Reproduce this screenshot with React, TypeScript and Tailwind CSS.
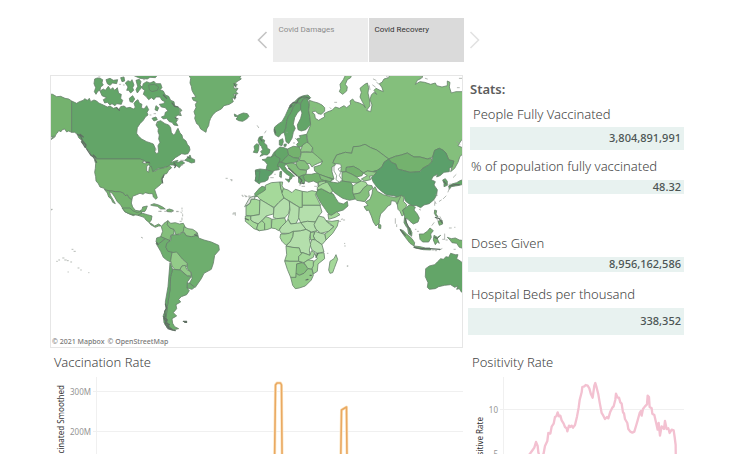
import React from "react";

type Shape = [fill: string, d: string];
type Region = { name: string; origin: [number, number]; shapes: Shape[]; islets: string; rugged?: string };

const DEEP = "#5b9f6a";
const DARK = "#63a568";
const MID = "#6eae6e";
const GREEN = "#74b26e";
const SOFT = "#84bf7c";
const LIGHT = "#93cb89";
const PALE = "#a5d99a";
const FAINT = "#b4dfac";
const NONE = "#dddfdc";

/* Every region is drawn at three units per map pixel, from its own origin. */
const regions: Region[] = [
  {
    name: "North America",
    origin: [50, 75],
    shapes: [
      [GREEN, "M-3 57L8 58L20 65L32 64L45 70L56 72L65 78V172L56 168L50 171L44 162L37 164L33 170L26 167L22 174L18 178L14 186L3 194L10 183L4 186L-3 192Z"],
      [DARK, "M65 78L80 85L88 80L100 76L104 71L112 76L118 70L122 80L132 75L140 78L146 84L160 90L172 96L180 93L190 100L200 97L206 104L212 95L222 93L230 99L240 97L250 102L256 97L252 85L258 78L264 74L268 84L276 88L274 98L282 102L290 92L296 104L291 112L294 120L286 126L280 136L270 146L262 158L260 175L266 184L275 192L290 200L302 204L310 207L316 220L315 230L320 236L326 232L324 212L330 202L326 192L328 180L324 170L325 160L318 150L322 140L332 137L345 146L356 150L362 158L364 172L370 180L376 176L380 166L384 160L390 174L396 180L398 190L408 198L412 208L418 215L420 225L414 236L405 238L395 236L386 242L376 248L368 256L362 264L372 259L384 256L380 262L372 270L360 270L352 276L345 275L340 279L325 280L316 286L308 290L304 282L298 270L290 262L280 256L270 252H137L128 243L122 240L118 228L110 222L104 210L98 206L95 196L86 188L82 178L74 172L65 172Z"],
      [DARK, "M134 12L142 9L150 10L158 14L156 24L160 30L152 36L150 46L144 48L138 58L133 50L137 38L132 26Z"],
      [DARK, "M150 48L160 42L166 46L175 34L182 44L188 38L194 46L202 38L206 55L214 58L212 70L218 76L214 88L200 86L195 92L186 86L180 90L172 82L164 84L160 74L170 68L156 62Z"],
      [DARK, "M226 24L234 17L241 20L246 14L252 30L248 38L251 46L242 54L236 46L230 46L234 36Z"],
      [DARK, "M258 16L268 13L273 20L270 30L276 36L268 46L262 54L258 44L263 34Z"],
      [DARK, "M168 14L180 10L190 16L203 14L200 26L188 24L180 31L172 26Z"],
      [DARK, "M212 8L222 6L224 18L216 20Z"],
      [DARK, "M238 70L248 62L254 72L248 82L240 80Z"],
      [DARK, "M250 1H322L316 8L300 7L292 12L270 10Z"],
      [DARK, "M280 26L290 20L300 24L312 19L318 26L332 26L336 38L330 44L340 48L346 60L356 64L362 76L372 80L374 92L384 96L396 106L390 112L394 122L384 120L376 126L382 136L378 142L384 152L372 150L366 142L358 140L350 130L340 132L334 126L344 122L346 112L354 108L346 98L334 96L328 88L340 86L345 80L336 76L330 66L318 66L312 74L304 68L296 74L288 64L280 58L284 46L276 40Z"],
      [DARK, "M296 30L314 28L326 36L322 46L306 50L298 44Z"],
      [DARK, "M318 92L326 98L322 108L315 104Z M306 130L318 126L322 134L312 138Z"],
      [DARK, "M372 264L384 262L396 258L404 264L394 270L388 278L380 272L372 272Z"],
      [DARK, "M404 256L416 246L420 240L424 250L434 254L434 262L424 264L416 260Z"],
      [GREEN, "M137 252H270L284 257L276 262L286 266L292 262L300 266L296 270L290 274L290 288L296 292L298 276L304 274L308 290L318 287L325 282L340 279L350 276L358 272L365 278L356 286L350 296L342 298L340 308L334 312L337 322L330 330L320 338L314 344L318 356L322 368L318 373L310 366L308 356L298 356L285 353L280 358L270 355L258 360L248 364L246 374L238 370L232 360L225 362L220 354L208 350L196 350L184 348L170 346L162 340L150 336L145 326L138 318L137 305L134 292L136 280L137 266L134 256Z"],
      [GREEN, "M163 343L170 346L184 348L196 350L208 350L220 354L225 362L232 360L238 370L246 374L244 384L248 396L256 406L268 408L276 404L278 396L292 393L288 404L284 410L276 410L270 420L262 416L250 422L236 416L224 410L218 400L212 390L202 380L194 366L186 354L178 350L182 362L188 372L196 386L188 382L184 372L176 366L172 354Z"],
      [GREEN, "M302 390L312 386L326 390L338 396L346 402L332 402L322 394L308 392Z"],
      [GREEN, "M350 405L358 402L370 406L366 411L352 410Z"],
    ],
    islets: "M326 409h6M380 410h5M396 408h1M280 14h4M208 28h4M220 30h3M146 6h4M312 116h5M300 120h3M2 402l3 3M6 192l-4 4M12 188l4 -3M320 146h3M318 222v3M392 256h10",
    rugged: "M82 178L92 184L98 198L108 210L106 218L100 208L94 200M110 222L122 240L130 246L140 262M288 262h10M342 300l-6 10l2 14M372 264l6 8l-4 6M376 128l8 4M366 84l8 10l10 2M200 98l8 8M340 60l10 10M90 178l10 8M130 240l8 8",
  },
  {
    name: "Europe",
    origin: [180, 75],
    shapes: [
      [MID, "M24 -3H186L180 8L184 12L174 18L166 24L172 30L160 34L164 42L174 40L168 50L174 56L160 58L168 68L156 70L160 80L148 88L132 92L124 102L108 110L98 120L92 130L88 140L86 152L80 162L78 172L68 166L62 162L56 150L50 146L44 130L46 122L42 110L48 98L46 88L52 80L40 76L36 68L48 66L40 54L36 46L34 34L30 24L32 10Z"],
      [DARK, "M163 117L172 122L180 118L190 114L202 116L207 124L200 132L188 139L176 137L168 132L174 126L164 124Z"],
      [DARK, "M238 186L248 184L246 192L254 196L252 204L260 210L262 220L270 224L268 234L262 240L252 239L240 244L246 236L242 230L248 224L244 214L238 208L234 196Z"],
      [DARK, "M222 214L230 206L237 210L236 224L232 234L220 232L224 224Z"],
      [DARK, "M284 156L296 146L306 140L316 122L324 104L330 92L344 80L356 68L370 62L384 60L392 68L384 76L376 70L370 72L362 86L350 82L340 96L334 112L324 126L320 140L318 158L312 172L304 176L296 186L286 180L282 168Z"],
      [DARK, "M350 82L362 88V104L352 114L344 128L340 148L346 160L340 172L336 190L326 206L318 200L316 186L312 172L318 158L320 140L324 126L334 112L340 96Z"],
      [DARK, "M362 86L370 72L376 70L384 76L388 90L386 106L390 130L392 148L378 164L364 168L354 164L352 150L362 130L366 114L362 104Z"],
      [DARK, "M298 196L308 191L310 200L306 212L298 210Z M312 208L319 207L318 214L312 214Z"],
      [DARK, "M246 254L258 252L262 246L274 246L284 238L300 250L304 256L294 268L298 284L286 286L276 290L258 284L262 268L254 258Z"],
      [DARK, "M274 246L282 232L290 226L290 244L284 240Z"],
      [DARK, "M284 234L290 224L300 216L312 218L322 222L326 240L316 248L322 258L298 262L300 250L288 244Z"],
      [DEEP, "M226 285L240 282L258 284L280 290L276 296L266 304L264 314L254 320L242 322L238 327L226 318L228 302Z"],
      [DEEP, "M226 288H240L238 302L236 318H225L228 304Z"],
      [DARK, "M296 262L312 262L318 266L314 274L322 286L334 294L344 304L338 304L334 312L328 314L330 304L318 296L306 284L300 276L292 274Z"],
      [DARK, "M300 290l5 -1l-1 18l-5 -2Z M316 312l14 2l-3 8Z"],
      [GREEN, "M322 222L340 214L358 216L362 226L362 242L356 250L340 248L326 240Z"],
      [MID, "M350 208L356 202L350 192L362 188L358 182L380 178L380 192L384 202L374 208L362 216L352 214Z"],
      [LIGHT, "M362 226L368 210L380 202L392 206L398 218L394 232L376 230L364 232Z"],
      [LIGHT, "M362 242L364 232L394 232L406 232L412 240L428 248L426 260L412 266L404 270L396 276L390 266L380 266L374 258L358 256Z"],
      [MID, "M316 248L326 240L340 248L358 250L352 260L336 264L318 266L304 262Z"],
      [SOFT, "M348 262L358 256L374 258L386 272L388 280L378 286L360 284L350 274Z"],
      [SOFT, "M318 266L336 264L348 268L354 280L360 284L380 286L378 298L364 302L356 308L350 300L340 294L326 278Z"],
      [MID, "M356 308L364 302L374 300L370 308L376 316L372 326L362 318L362 328L356 322Z"],
      [GREEN, "M370 304L376 298L394 298L410 294L428 298L444 294L456 300L460 314L440 320L424 318L412 324L400 318L386 322L374 316Z"],
      [PALE, "M414 324L440 320L438 330L424 340L414 334Z"],
      [GREEN, "M412 344L424 340L428 356L416 362Z"],
      [MID, "M224 356L238 340L246 334L262 338L256 348L246 358L226 366Z"],
    ],
    islets: "M232 152l4 6M258 168l-4 6M138 310h4M152 314h4M160 414h4M188 364h2M196 365h5M206 366h4M272 308h8M284 298h2M302 308h3M346 190l4 4M340 204h4M366 334h8M404 334h7M320 172h2M0 100v18M358 330h3M2 270h6",
    rugged: "M330 92L340 82L350 84L356 72L366 66L378 66L388 70M328 98l8 -6M162 26l6 10M168 58l-4 14M240 190l6 8M356 306l10 10l-4 8l10 2M326 280l14 12l10 10M30 250l-8 -4M283 162l4 12",
  },
  {
    name: "Asia",
    origin: [320, 75],
    shapes: [
      [SOFT, "M-32 76L-20 80L-6 84L6 90L14 98L14 108L4 118L-6 116L-14 108L-24 112L-16 118L-14 130L-4 136L6 130L14 126L12 116L24 110L36 106L46 96L58 100L72 92L80 98L92 88L90 78L98 72L104 80L118 84L130 90L136 98L128 82L120 66L124 52L120 40L134 28L142 24L146 38L144 54L148 72L150 92L140 106L152 110L156 90L150 74L154 60L162 52L170 58L162 46L168 40L180 46L190 50L186 38L178 26L186 22L192 12L206 8L210 -3H312L304 10L292 16L286 28L300 20L314 22L332 28L346 24L350 32L366 36L382 32L382 18L390 22L388 36L394 54L408 50L424 50L436 44V190L424 196L414 212L436 222V232L420 244L414 262L404 280L392 290L400 262L386 254L378 234L370 226L358 220L344 226L338 246L322 252L300 246L282 246L262 234L244 240L226 244L206 252L190 240L170 225L152 218L135 208L118 214L100 215L95 235L76 232L50 240L40 258L46 270L36 276L36 290L42 312L20 306L-2 298L-16 288L-18 276L2 270L8 258L-8 244L-22 232L-22 218L-36 202L-40 178L-28 150L-30 130L-34 106L-32 90Z"],
      [SOFT, "M78 -3H96L92 8L82 14L76 28L82 36L80 48L68 58L58 50L62 40L60 28L70 14Z"],
      [SOFT, "M38 264L50 240L76 232L95 235L100 215L118 214L135 208L152 218L170 225L190 240L206 252L192 262L186 276L172 286L158 290L142 288L130 294L118 284L100 274L80 276L78 290L62 290L64 276L56 268Z"],
      [GREEN, "M206 252L226 244L244 240L262 234L282 246L300 246L322 252L334 250L336 260L326 270L308 280L300 290L270 292L248 286L232 282L228 268L214 262Z"],
      [DEEP, "M206 252L214 262L228 268L232 282L248 286L270 292L300 290L308 280L326 270L336 260L338 246L344 226L358 220L370 226L378 234L386 254L402 258L396 276L388 280L388 290L372 292L360 302L350 306L352 298L340 304L334 314L346 320L342 330L352 344L350 360L342 374L328 386L312 390L302 398L290 392L276 392L266 386L256 378L252 364L236 368L222 362L200 360L186 350L172 338L160 322L154 308L164 298L158 290L172 286L186 276L192 262Z"],
      [GREEN, "M78 278L100 274L118 284L130 294L126 302L110 306L96 298L78 290Z"],
      [SOFT, "M66 292L78 290L96 298L110 306L124 318L110 324L92 322L66 318Z"],
      [LIGHT, "M130 294L142 288L170 292L160 302L148 304L152 314L134 318L124 312L142 302Z"],
      [SOFT, "M-2 298L20 306L36 312L30 324L16 318L2 312Z"],
      [PALE, "M-6 322L14 318L22 330L34 346L36 356L20 352L0 342Z"],
      [MID, "M16 316L30 320L40 322L54 324L66 318L92 322L100 334L98 350L106 372L88 376L68 370L56 362L42 352L34 342L24 330Z"],
      [PALE, "M98 334L108 326L124 318L138 322L142 330L130 340L120 354L100 358L98 350Z"],
      [SOFT, "M100 358L120 354L130 340L142 330L156 332L158 340L146 348L148 362L134 380L110 376L106 372Z"],
    ],
    islets: "M44 82h6M30 98l4 4M150 44l-2 -12M160 12l8 4M170 22l10 8M158 30l8 6M200 4l4 4M300 4l8 4M316 10l6 2M412 38h6M418 10h8M344 378l4 8M410 200l10 8M386 330l4 -4M-20 100h4",
  },
  {
    name: "Africa",
    origin: [230, 160],
    shapes: [
      [NONE, "M44 140L54 122L60 112L74 108V118H64L60 130Z"],
      [PALE, "M80 106L94 98L106 90L106 76L124 68L150 66L152 84L158 100L162 114L146 128L132 142L120 136L90 118Z"],
      [PALE, "M150 66L158 66L156 78L162 86L156 98L152 84Z"],
      [PALE, "M160 86L174 90L186 98L196 88L217 94V144L208 142L180 124L162 114L156 100Z"],
      [PALE, "M217 94L232 96L246 92L262 96L256 104L272 136H217Z"],
      [PALE, "M48 140L60 130L64 118H78L90 122L88 164L62 168L48 166Z"],
      [FAINT, "M90 118L120 136L132 144L130 162L108 168L96 182L84 192L70 186L62 180L62 168L88 164Z"],
      [FAINT, "M132 144L146 128L162 114L178 124L180 140L176 160L164 174L140 176L130 172Z"],
      [FAINT, "M178 124L208 142V172L198 190L182 192L174 176L180 150Z"],
      [FAINT, "M217 136H270L276 156L266 168L256 186L232 184L212 188L206 172L208 142H217Z"],
      [FAINT, "M212 188L232 184L256 186L254 200L262 212L244 216L228 208Z"],
      [FAINT, "M266 168L282 172L288 182L300 194L312 200L296 214L272 220L258 208L252 194Z"],
      [PALE, "M288 182L306 184L326 181L322 198L308 220L288 240L284 222L296 214L312 200Z"],
      [FAINT, "M256 214L272 220L284 222L288 240L276 254L256 240L250 228Z"],
      [FAINT, "M246 238L256 240L276 254L282 276L262 280L246 270L240 254Z"],
      [PALE, "M240 218L254 216L250 228L254 238L242 240Z"],
      [FAINT, "M190 214L212 212L228 208L242 216L238 236L242 254L238 270L240 286L224 280L212 278L208 264L186 262L168 258L180 246L188 230Z"],
      [PALE, "M126 178L140 176L164 174L168 186L154 200L146 212L136 206L124 204Z"],
      [PALE, "M46 168L62 168L62 180L70 186L84 192L80 206L88 212L72 206L58 194L46 184Z"],
      [PALE, "M84 192L96 182L104 190V210L88 212L80 206Z"],
      [PALE, "M96 182L108 170L124 176L124 204L114 208L104 210V190Z"],
      [FAINT, "M154 200L168 186L174 178L182 192L198 190L212 188L228 208L212 212L190 214L178 220L154 220L148 210Z"],
      [PALE, "M152 222H166L178 220L190 214L188 230L180 246L168 256L156 244L150 232Z"],
      [PALE, "M168 258L186 262L208 264L212 278H218L206 290V304L180 304L164 302L170 284Z"],
      [PALE, "M206 290L218 278L240 286L244 272L254 278L250 292L234 300L222 308L206 304Z"],
      [PALE, "M254 282L282 278L284 296L264 312L262 334L250 342L246 326L252 304L262 296Z"],
      [PALE, "M164 303L180 304L206 304L216 308L200 312V334L198 354L182 352L172 328Z"],
      [SOFT, "M200 312L216 308L224 312L234 326L222 340L208 346L198 340Z"],
      [PALE, "M222 308L234 300L250 302L250 318L244 328L234 326Z"],
      [LIGHT, "M182 352H198V340L208 346L222 340L234 326L246 328L250 346L244 360L226 378L208 384L196 386L188 376Z"],
      [PALE, "M298 318L300 304L312 296L318 284L323 298L314 322L308 338L300 340L296 330Z"],
      [MID, "M258 102L262 92L274 86L292 96L310 102L318 116L326 128L340 132L352 124L354 138L340 150L320 156L304 166L294 160L286 148L272 128Z"],
      [PALE, "M294 162L304 166L320 156L330 164L316 172L296 178Z"],
      [PALE, "M276 72L292 66L302 82L308 94L300 100L286 92L274 86L262 90L262 82Z"],
    ],
    islets: "M36 106h2M44 106l6 3M56 108h4M8 162h5M16 158v8M292 280h2M326 184h6M340 180h4M344 258h2M150 48l4 -3M352 318h2M4 62h2",
    rugged: "M46 176l10 4M228 360l6 -2M240 346h4M264 280l-6 12",
  },
  {
    name: "South and South-East Asia",
    origin: [340, 160],
    shapes: [
      [SOFT, "M105 80L112 94L130 104L152 110L168 112L184 106L188 112L176 122L172 134L166 124L154 122L152 134L144 138L134 150L122 162L118 178L118 188L108 198L100 186L94 168L86 150L80 152L72 140L84 136L76 126L90 118L96 102L98 88Z"],
      [GREEN, "M116 190L123 196L122 206L115 204Z"],
      [LIGHT, "M172 134L176 122L184 106L192 112L190 124L200 134L198 142L188 150L192 164L186 168L180 154L174 148Z"],
      [MID, "M188 150L200 142L206 136L216 136L226 142L222 150L232 162L238 174L234 186L220 192L210 184L204 178L198 174L198 190L204 200L200 202L192 188L194 168Z"],
      [MID, "M202 200L210 204L216 218L215 228L206 222Z"],
      [GREEN, "M180 208L190 212L200 222L216 236L224 248L222 258L210 250L196 232L186 218Z"],
      [GREEN, "M238 222L250 222L262 214L270 204L280 212L272 222L274 232L266 246L248 246L240 238Z"],
      [GREEN, "M222 258L240 260L256 264L270 264L272 270L250 269L226 264Z"],
      [GREEN, "M282 226L292 232L302 226L292 236L298 250L292 246L286 254L280 240Z"],
      [GREEN, "M284 150L290 152L288 162L294 170L288 168L283 160Z M294 184L306 180L308 192L298 196Z"],
      [GREEN, "M322 232L334 236L346 234L358 240L372 242V266L358 262L350 250L336 248L330 240Z"],
      [DARK, "M308 60L316 56L322 64L322 76L312 80L312 70Z"],
      [DARK, "M326 78L336 72L350 68L360 62L372 58V72L358 76L346 78L334 80L328 88Z"],
      [DARK, "M257 326L268 318L284 314L292 306L302 296L310 298L318 290L326 292L332 280L346 284L354 284L350 296L362 304L372 312V400L364 396L358 386L350 388L354 378L344 382L332 374L314 376L296 380L286 386L268 388L262 382L264 368L256 350Z"],
    ],
    islets: "M166 176v14M170 194v6M4 178l4 -1M14 250v1M22 318v1M210 226l5 5M276 270h6M286 272h4M298 270l8 -4M314 222v14M308 238h6M318 240h4M328 204h6M344 202h1M284 128v8M298 124l6 -4M310 116l8 -8M324 96l4 -10M226 208h2M232 214h4M276 196l6 -8M290 176l4 6M300 170l4 8M340 52l8 -8M288 104l4 2M238 148l4 2M342 268h4",
    rugged: "M196 176l4 14l8 16l4 16M222 262l20 4l28 0l30 2M286 172l12 4l8 12M284 232l8 4M330 78l14 -4l14 0M182 210l14 16M312 64l6 8",
  },
  {
    name: "South America",
    origin: [50, 210],
    shapes: [
      [GREEN, "M216 -6L226 6L240 12L252 14L264 16L276 10L272 4L262 8L248 2L240 -6Z"],
      [GREEN, "M264 16L270 12L278 10L292 14L306 18L304 30L298 38L288 30L282 22Z"],
      [GREEN, "M298 38L306 42L314 48L326 42L334 48L326 48L316 52L302 44Z"],
      [SOFT, "M334 50L342 40L354 32L352 44L360 54L372 58L372 72L362 76L360 92L346 86L332 80L338 64Z"],
      [SOFT, "M354 32L362 40L376 38L388 42L400 40L406 52L400 64L388 72L378 74L372 58L360 54L352 44Z"],
      [LIGHT, "M402 50L414 56L428 58L440 66L436 78L424 80L410 78L400 64Z"],
      [MID, "M320 84L332 80L346 86L336 94L326 102L318 96Z"],
      [MID, "M318 100L326 102L336 94L346 86L360 92L350 100L348 112L354 124L366 126L364 140L362 156L350 150L340 142L332 124Z"],
      [MID, "M350 100L362 92L364 76L374 74L388 74L400 66L410 78L424 80L436 78L442 68L446 84L462 90L484 96L506 106L508 120L494 136L490 160L484 178L462 190L454 206L436 232L418 220L426 206L424 188L412 176V160L398 148L380 134L366 126L354 124L348 112Z"],
      [LIGHT, "M366 128L380 126L398 148L412 160L410 170L396 168L390 180L374 178L366 168L362 152Z"],
      [LIGHT, "M390 178L396 168L406 166L410 178L422 186L424 198L412 198Z"],
      [MID, "M412 218L422 222L434 232L426 238L411 234Z"],
      [MID, "M368 178L390 180L412 198L424 200L412 216L411 234L418 242L410 254L394 260L386 268L392 276L378 284L380 296L370 308L380 318L366 326L368 340L374 350L386 356L368 360L354 346L348 328L352 290L360 240L362 200Z"],
      [DARK, "M360 158L368 178L362 200L360 240L352 290L348 328L354 346L368 360L352 354L342 338L340 316L348 296L346 276L354 230Z"],
    ],
    islets: "M274 82l4 2M66 118h3M72 124h4M38 144h4M44 150h5M52 152h3M26 150h3M20 154h2M62 156h3M84 174h3M92 180h2M116 188h1M54 186h1M392 6l4 4M398 14v4M396 24v6M390 34h4M330 4h4M344 4h6M364 4h6M380 4h4M396 -6v3M4 -2h3",
    rugged: "M346 282l4 12l-6 10l2 14l-4 8l6 8l-2 10l10 4l-2 8l12 4l10 2M340 320l12 10l-6 8l12 6M350 350l16 8M400 334h10M404 337h6M434 74l8 4M320 98l4 6",
  },
];

function WorldMap() {
  return (
    <svg viewBox="51 76 411 271" className="block w-full" role="img" aria-label="World map shaded by vaccination progress">
      {regions.map((r) => (
        <g key={r.name} transform={`translate(${r.origin[0]} ${r.origin[1]}) scale(0.3333)`} strokeLinejoin="round">
          {r.shapes.map(([fill, d]) => (
            <path key={d} d={d} fill={fill} stroke="#66806a" strokeWidth="2.4" />
          ))}
          <path d={r.islets} fill="none" stroke="#9aa19a" strokeWidth="2.2" strokeLinecap="round" />
          {r.rugged && <path d={r.rugged} fill="none" stroke="#5f6f63" strokeWidth="3.6" strokeLinecap="round" />}
        </g>
      ))}
      {/* Caspian Sea */}
      <path
        transform="translate(320 75) scale(0.3333)"
        fill="#fff"
        stroke="#66806a"
        strokeWidth="2"
        d="M42 274L50 266L62 268L64 276L54 282L62 292L58 302L66 314L58 322L48 314L50 302L42 288Z"
      />
    </svg>
  );
}

const GRID = "#f0f0f0";
const RATE = "M96 509H274L275.5 385L277 383H280.5L281.5 385L282.5 509H340L341.5 410L346.5 407L347.5 509H460";

function VaccinationChart() {
  return (
    <svg viewBox="50 371 413 150" className="block w-full font-['Noto_Sans',sans-serif]" role="img" aria-label="Vaccination rate over time">
      <path d="M96.5 377V510M93 391.5H463M93 431.5H463M93 471.5H463" stroke={GRID} fill="none" />
      <g fontSize="8" fill="#959595" textAnchor="end">
        <text x="91" y="395">300M</text>
        <text x="91" y="435">200M</text>
      </g>
      <text transform="translate(64 385) rotate(-90)" textAnchor="end" fontSize="8" fill="#333">
        Vaccinated Smoothed
      </text>
      <g fill="none" strokeLinejoin="round">
        <path d={RATE} stroke="#fbe6c4" strokeWidth="3" />
        <path d={RATE} stroke="#eaa962" strokeWidth="1.6" />
      </g>
    </svg>
  );
}

function PositivityChart() {
  return (
    <svg viewBox="468 371 216 150" className="block w-full font-['Noto_Sans',sans-serif]" role="img" aria-label="Positivity rate over time">
      <path d="M503.5 377V510M500 409.5H684M500 454.5H684" stroke={GRID} fill="none" />
      <g fontSize="8" fill="#959595" textAnchor="end">
        <text x="498" y="413">10</text>
        <text x="498" y="457">5</text>
      </g>
      <text transform="translate(483 417) rotate(-90)" textAnchor="end" fontSize="8" fill="#333">
        Positive Rate
      </text>
      <path
        transform="translate(465 345) scale(0.3333)"
        d="M120 490L150 420L175 350L195 326L203 315L208 308L213 291L218 303L220 322L226 340L236 325L240 303L247 288L250 264L256 266L260 245L266 236L270 216L274 214L278 202L282 214L286 212L290 226L296 236L300 246L305 250L307 259L312 242L316 246L320 242L324 248L330 240L336 215L341 188L344 165L350 142L352 126L358 124L362 120L368 122L373 130L378 148L383 158L388 122L391 114L395 128L400 148L404 172L410 204L415 212L420 222L426 216L430 220L436 200L442 188L446 184L451 164L453 146L458 158L462 158L466 172L470 176L474 202L477 205L480 222L487 234L490 252L496 260L502 263L508 260L514 240L518 226L524 204L528 198L530 212L534 192L540 184L546 178L548 152L552 156L554 186L560 190L562 206L568 210L574 236L578 254L581 234L585 272L590 244L597 252L600 228L605 252L610 250L614 264L620 254L626 256L629 276L632 300L634 490"
        fill="none"
        stroke="#f3c1d1"
        strokeWidth="7"
        strokeLinejoin="round"
      />
    </svg>
  );
}

function Chevron({ d, label, tone }: { d: string; label: string; tone: string }) {
  return (
    <button type="button" aria-label={label} className={`h-11 w-[11px] ${tone}`}>
      <svg viewBox="0 0 11 44" className="block h-11 w-[11px]" fill="none" stroke="currentColor" strokeWidth="1.6">
        <path d={d} />
      </svg>
    </button>
  );
}

function Stat({ label, value, bar, className = "" }: { label: string; value: string; bar: string; className?: string }) {
  return (
    <div className={className}>
      <dt className="pl-[3px] text-[13px] leading-[18px] font-light text-[#444]">{label}</dt>
      <dd className={`flex items-center justify-end bg-[#e8f2f0] pr-[3px] text-[11px] font-medium text-[#4c5554] ${bar}`}>{value}</dd>
    </div>
  );
}

export default function App() {
  return (
    <div className="h-screen overflow-hidden bg-white pt-[18px] pr-[52px] pl-[50px] font-['Noto_Sans',sans-serif]">
      <nav className="-mr-[2px] flex justify-center gap-[5px]" aria-label="Story points">
        <Chevron label="Previous" tone="text-[#c4c4c4]" d="M9.5 14L1.5 22L9.5 30" />
        <div className="flex gap-px font-[Roboto,sans-serif] text-[8px] leading-[8px]">
          <button type="button" className="flex h-11 w-[95px] items-start bg-[#ececec] px-[6px] pt-[8px] text-[#8c8c8c]">
            Covid Damages
          </button>
          <button type="button" aria-current="true" className="flex h-11 w-[95px] items-start bg-[#dadada] px-[6px] pt-[8px] text-[#333]">
            Covid Recovery
          </button>
        </div>
        <Chevron label="Next" tone="text-[#e2e2e2]" d="M1.5 14L9.5 22L1.5 30" />
      </nav>

      <main className="mt-[13px] grid grid-cols-[minmax(0,1fr)_216px] gap-x-[5px]">
        <div className="relative self-start border border-[#e6e6e6]">
          <WorldMap />
          <p className="absolute bottom-0 left-[1px] flex gap-[3px] text-[7px] leading-[10px] font-medium text-[#777]">
            <a href="#mapbox">© 2021 Mapbox</a>
            <a href="#osm">© OpenStreetMap</a>
          </p>
        </div>

        <section>
          <h2 className="pt-[5px] pl-[2px] text-[13px] leading-[18px] font-semibold text-[#5c5c5c]">Stats:</h2>
          <dl className="flex flex-col pt-[7px]">
            <Stat label="People Fully Vaccinated" value="3,804,891,991" bar="mt-[4px] h-[23px]" className="ml-[2px]" />
            <Stat label="% of population fully vaccinated" value="48.32" bar="mt-[5px] h-[14px]" className="mt-[7px]" />
            <Stat label="Doses Given" value="8,956,162,586" bar="mt-[5px] h-[15px]" className="mt-[40px]" />
            <Stat label="Hospital Beds per thousand" value="338,352" bar="mt-[5px] h-[27px]" className="mt-[13px]" />
          </dl>
        </section>

        <section>
          <h2 className="pt-[5px] pl-[4px] text-[13px] leading-[18px] font-light text-[#444]">Vaccination Rate</h2>
          <VaccinationChart />
        </section>
        <section>
          <h2 className="pt-[5px] pl-[4px] text-[13px] leading-[18px] font-light text-[#444]">Positivity Rate</h2>
          <PositivityChart />
        </section>
      </main>
    </div>
  );
}
